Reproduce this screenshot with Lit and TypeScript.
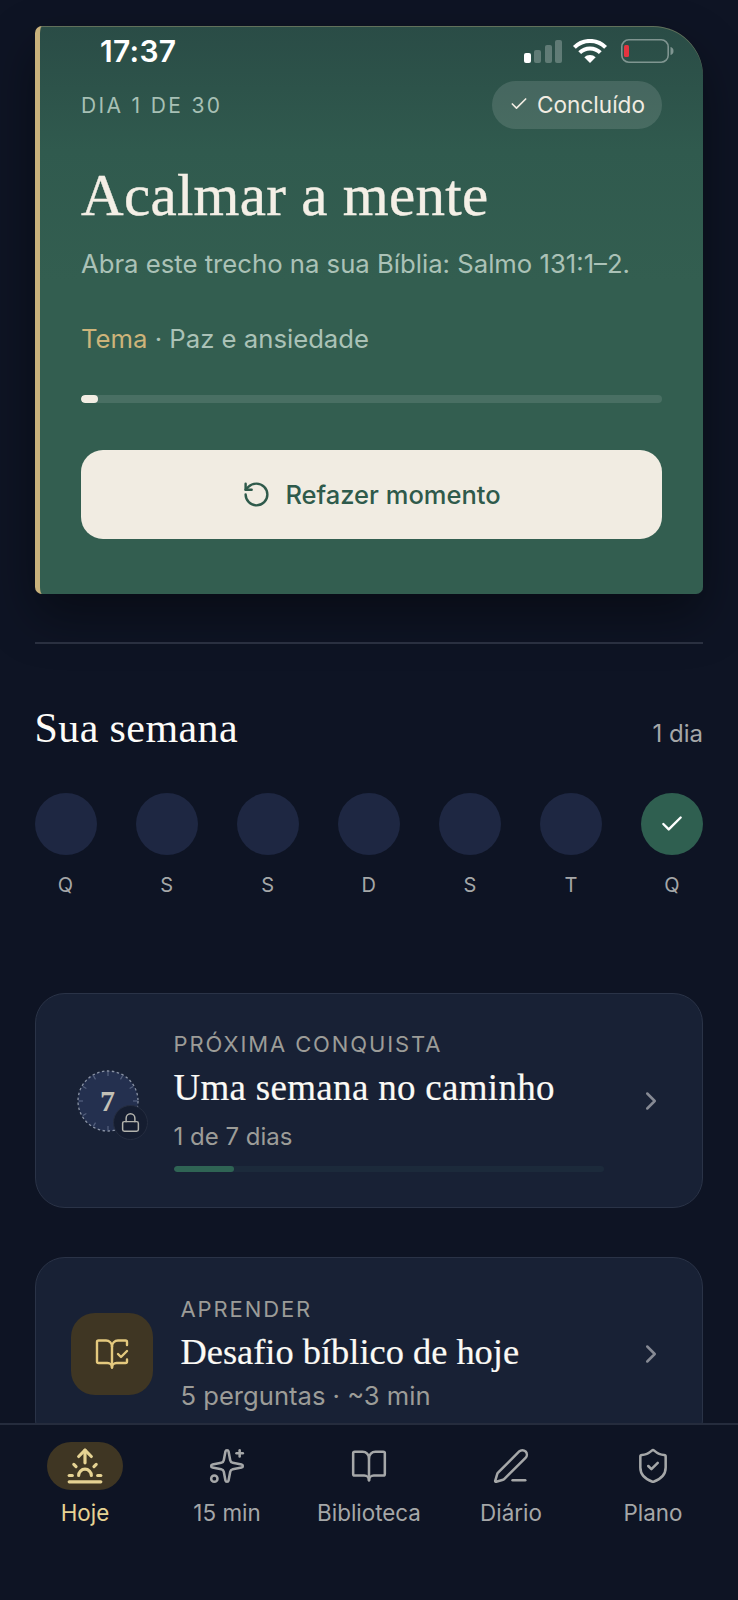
import { LitElement, html, css, svg } from "lit";
import { customElement } from "lit/decorators.js";

const icon = (size: number, sw: number, body: unknown) => html`<svg
  width=${size}
  height=${size}
  viewBox="0 0 24 24"
  fill="none"
  stroke="currentColor"
  stroke-width=${sw}
  stroke-linecap="round"
  stroke-linejoin="round"
>${body}</svg>`;

const P = {
  sunrise: svg`<path d="M12 2v8"/><path d="m4.93 10.93 1.41 1.41"/><path d="M2 18h2"/><path d="M20 18h2"/><path d="m19.07 10.93-1.41 1.41"/><path d="M22 22H2"/><path d="m8 6 4-4 4 4"/><path d="M16 18a4 4 0 0 0-8 0"/>`,
  sparkles: svg`<path d="M11.017 2.814a1 1 0 0 1 1.966 0l1.051 5.558a2 2 0 0 0 1.594 1.594l5.558 1.051a1 1 0 0 1 0 1.966l-5.558 1.051a2 2 0 0 0-1.594 1.594l-1.051 5.558a1 1 0 0 1-1.966 0l-1.051-5.558a2 2 0 0 0-1.594-1.594l-5.558-1.051a1 1 0 0 1 0-1.966l5.558-1.051a2 2 0 0 0 1.594-1.594z"/><path d="M20 2v4"/><path d="M22 4h-4"/><circle cx="4" cy="20" r="2"/>`,
  book: svg`<path d="M12 7v14"/><path d="M3 18a1 1 0 0 1-1-1V4a1 1 0 0 1 1-1h5a4 4 0 0 1 4 4 4 4 0 0 1 4-4h5a1 1 0 0 1 1 1v13a1 1 0 0 1-1 1h-6a3 3 0 0 0-3 3 3 3 0 0 0-3-3z"/>`,
  pen: svg`<path d="M13 21h8"/><path d="M21.174 6.812a1 1 0 0 0-3.986-3.987L3.842 16.174a2 2 0 0 0-.5.83l-1.321 4.352a.5.5 0 0 0 .623.622l4.353-1.32a2 2 0 0 0 .83-.497z"/>`,
  shield: svg`<path d="M20 13c0 5-3.5 7.5-7.66 8.95a1 1 0 0 1-.67-.01C7.5 20.5 4 18 4 13V6a1 1 0 0 1 1-1c2 0 4.5-1.2 6.24-2.72a1.17 1.17 0 0 1 1.52 0C14.51 3.81 17 5 19 5a1 1 0 0 1 1 1z"/><path d="m9 12 2 2 4-4"/>`,
  bookCheck: svg`<path d="M12 21V7"/><path d="m16 12 2 2 4-4"/><path d="M22 6V4a1 1 0 0 0-1-1h-5a4 4 0 0 0-4 4 4 4 0 0 0-4-4H3a1 1 0 0 0-1 1v13a1 1 0 0 0 1 1h6a3 3 0 0 1 3 3 3 3 0 0 1 3-3h6a1 1 0 0 0 1-1v-1.3"/>`,
  rotate: svg`<path d="M3 12a9 9 0 1 0 9-9 9.75 9.75 0 0 0-6.74 2.74L3 8"/><path d="M3 3v5h5"/>`,
  lock: svg`<rect x="3" y="11" width="18" height="11" rx="2"/><path d="M7 11V7a5 5 0 0 1 10 0v4"/>`,
  check: svg`<path d="M20 6 9 17l-5-5"/>`,
  chevron: svg`<path d="m9 18 6-6-6-6"/>`,
};

const DAYS = ["Q", "S", "S", "D", "S", "T", "Q"];
const NAV = [
  { label: "Hoje", icon: P.sunrise, active: true },
  { label: "15 min", icon: P.sparkles, active: false },
  { label: "Biblioteca", icon: P.book, active: false },
  { label: "Diário", icon: P.pen, active: false },
  { label: "Plano", icon: P.shield, active: false },
];

const ticks = Array.from({ length: 12 }, (_, i) => {
  const a = (i * Math.PI) / 6;
  const s = Math.sin(a);
  const c = Math.cos(a);
  return svg`<line x1=${31 + 29 * s} y1=${31 - 29 * c} x2=${31 + 25 * s} y2=${31 - 25 * c}/>`;
});

@customElement("app-root")
export class AppRoot extends LitElement {
  static styles = css`
    :host {
      display: block;
      position: relative;
      height: 1600px;
      overflow: hidden;
      background: #0e1424;
      font-family: "Inter", "Liberation Sans", sans-serif;
      color: #f4efe6;
    }
    svg {
      display: block;
      flex: none;
    }
    .page {
      padding: 26px 35px 0 34.5px;
    }
    .serif {
      font-family: "Liberation Serif", serif;
    }

    .status {
      position: absolute;
      top: 37px;
      left: 100px;
      width: 574px;
      height: 28px;
      display: flex;
      align-items: center;
      justify-content: space-between;
    }
    .time {
      font-size: 30px;
      font-weight: 600;
      line-height: 28px;
      color: #fff;
      letter-spacing: 0.3px;
    }

    .hero {
      height: 568px;
      box-sizing: border-box;
      padding: 55px 41px 54px 41.5px;
      border-left: 5px solid #c9b27c;
      border-radius: 7px 50px 7px 7px;
      background: linear-gradient(180deg, #2a4c46 0%, #305a4e 22%, #335e50 45%, #335e50 100%);
      box-shadow: 0 22px 50px rgba(0, 0, 0, 0.4), inset 0 1px 0 rgba(200, 180, 130, 0.35);
    }
    .hero-top {
      display: flex;
      align-items: center;
      justify-content: space-between;
    }
    .day {
      font-size: 21px;
      letter-spacing: 2.35px;
      color: #a7c0b5;
    }
    .chip {
      height: 48px;
      box-sizing: border-box;
      padding: 0 17px 2px;
      display: flex;
      align-items: center;
      gap: 8px;
      border-radius: 24px;
      background: rgba(255, 255, 255, 0.12);
      font-size: 22.6px;
      color: #f1ece2;
    }
    .hero h1 {
      margin: 34px 0 0;
      font-size: 59px;
      line-height: 64px;
      font-weight: 400;
      letter-spacing: 0.3px;
      color: #f4efe6;
      -webkit-text-stroke: 0.4px #f4efe6;
    }
    .verse {
      margin: 21px 0 0;
      font-size: 25.7px;
      line-height: 32px;
      color: #abc2b7;
    }
    .theme {
      margin: 43px 0 0;
      font-size: 25.7px;
      line-height: 32px;
      color: #abc2b7;
    }
    .theme b {
      font-weight: 400;
      color: #cdb47a;
    }
    .track {
      margin-top: 40px;
      height: 8px;
      border-radius: 4px;
      background: rgba(255, 255, 255, 0.11);
      overflow: hidden;
    }
    .track i {
      display: block;
      height: 100%;
      border-radius: 4px;
      background: #f2ede3;
    }
    .cta {
      margin-top: 47px;
      height: 89px;
      border-radius: 22px;
      background: #f1ece2;
      color: #2f5a4b;
      display: flex;
      align-items: center;
      justify-content: center;
      gap: 14px;
      font-size: 25.5px;
      font-weight: 500;
    }

    .divider {
      margin-top: 48px;
      height: 2px;
      background: #2a3040;
    }
    .week-head {
      margin-top: 62px;
      display: flex;
      align-items: baseline;
      justify-content: space-between;
    }
    .week-head h2 {
      margin: 0;
      font-size: 42px;
      line-height: 44px;
      font-weight: 400;
      letter-spacing: 0.4px;
      color: #fdfcf8;
    }
    .week-head span {
      font-size: 24px;
      color: #a5a7a8;
    }
    .days {
      margin-top: 43px;
      display: flex;
      justify-content: space-between;
    }
    .dayc {
      width: 62px;
      display: flex;
      flex-direction: column;
      align-items: center;
      gap: 16px;
    }
    .dot {
      width: 62px;
      height: 62px;
      border-radius: 50%;
      background: #1e2742;
      display: flex;
      align-items: center;
      justify-content: center;
      color: #fff;
    }
    .dot.on {
      background: #2f5f50;
    }
    .dayc span {
      font-size: 20px;
      line-height: 28px;
      color: #a5a7a8;
    }

    .card {
      box-sizing: border-box;
      border: 1px solid #2a3347;
      border-radius: 30px;
      background: #182135;
      display: flex;
      align-items: center;
    }
    .goal {
      margin-top: 94px;
      height: 215px;
      padding-left: 41px;
    }
    .learn {
      margin-top: 49px;
      height: 193px;
      padding-left: 35px;
    }
    .badge {
      position: relative;
      width: 62px;
      height: 62px;
      flex: none;
      margin-right: 35px;
      display: flex;
      align-items: center;
      justify-content: center;
    }
    .badge svg.dial {
      position: absolute;
      inset: 0;
    }
    .badge .num {
      position: relative;
      font-size: 30px;
      font-weight: 700;
      color: #c2c0b6;
    }
    .lockb {
      position: absolute;
      left: 36px;
      top: 35px;
      width: 35px;
      height: 35px;
      box-sizing: border-box;
      border-radius: 50%;
      background: #151d30;
      border: 1px solid #252d40;
      display: flex;
      align-items: center;
      justify-content: center;
      color: #b3b3ad;
    }
    .body {
      width: 430px;
      flex: none;
    }
    .eyebrow {
      font-size: 22px;
      line-height: 28px;
      letter-spacing: 1.9px;
      color: #9c9c98;
    }
    .title {
      font-size: 36.4px;
      line-height: 44px;
      color: #fbfaf5;
      -webkit-text-stroke: 0.2px #fbfaf5;
    }
    .goal .title {
      margin-top: 8px;
      font-size: 37px;
      letter-spacing: 0.3px;
    }
    .learn .title {
      margin-top: 7px;
    }
    .sub {
      font-size: 24px;
      line-height: 32px;
      color: #9c9c98;
    }
    .goal .sub {
      margin-top: 11px;
    }
    .learn .sub {
      margin-top: 6px;
      font-size: 25.6px;
    }
    .mini {
      margin-top: 13px;
      height: 6px;
      border-radius: 3px;
      background: #1c2a3b;
      overflow: hidden;
    }
    .mini i {
      display: block;
      height: 100%;
      border-radius: 3px;
      background: #2f6454;
    }
    .chev {
      margin-left: 32px;
      color: #868a94;
    }
    .learn .chev {
      margin-left: 25px;
    }
    .tile {
      width: 82px;
      height: 82px;
      flex: none;
      margin-right: 28px;
      border-radius: 24px;
      background: #3f3623;
      color: #e4c97e;
      display: flex;
      align-items: center;
      justify-content: center;
    }

    nav {
      position: absolute;
      left: 0;
      right: 0;
      top: 1423px;
      bottom: 0;
      box-sizing: border-box;
      padding: 17px 14px 0;
      display: grid;
      grid-template-columns: repeat(5, 1fr);
      align-items: start;
      background: #0e1424;
      border-top: 2px solid #252c3d;
    }
    .tab {
      display: flex;
      flex-direction: column;
      align-items: center;
      color: #a5a7a8;
      font-size: 22.4px;
      line-height: 28px;
    }
    .pill {
      width: 76px;
      height: 48px;
      border-radius: 24px;
      display: flex;
      align-items: center;
      justify-content: center;
      margin-bottom: 9px;
    }
    .tab.active {
      color: #e6d393;
    }
    .tab.active .pill {
      background: #3f3623;
    }
  `;

  render() {
    return html`
      <div class="page">
        <section class="hero">
          <div class="hero-top">
            <span class="day">DIA 1 DE 30</span>
            <span class="chip">${icon(20, 2, P.check)}Concluído</span>
          </div>
          <h1 class="serif">Acalmar a mente</h1>
          <p class="verse">Abra este trecho na sua Bíblia: Salmo 131:1–2.</p>
          <p class="theme"><b>Tema</b> · Paz e ansiedade</p>
          <div class="track"><i style="width:${(1 / 34) * 100}%"></i></div>
          <div class="cta">${icon(29, 2, P.rotate)}Refazer momento</div>
        </section>

        <div class="divider"></div>

        <div class="week-head">
          <h2 class="serif">Sua semana</h2>
          <span>1 dia</span>
        </div>
        <div class="days">
          ${DAYS.map(
            (d, i) => html`<div class="dayc">
              <div class="dot ${i === 6 ? "on" : ""}">
                ${i === 6 ? icon(26, 2.2, P.check) : ""}
              </div>
              <span>${d}</span>
            </div>`
          )}
        </div>

        <section class="card goal">
          <div class="badge">
            <svg class="dial" width="62" height="62" viewBox="0 0 62 62" fill="none">
              <circle cx="31" cy="31" r="30" fill="#24304f" stroke="#8a93a5" stroke-width="1.3" stroke-dasharray="2.5 2.5" />
              <g stroke="#55617e" stroke-width="1.2">${ticks}</g>
            </svg>
            <span class="num serif">7</span>
            <div class="lockb">${icon(21, 1.7, P.lock)}</div>
          </div>
          <div class="body">
            <div class="eyebrow">PRÓXIMA CONQUISTA</div>
            <div class="title serif">Uma semana no caminho</div>
            <div class="sub">1 de 7 dias</div>
            <div class="mini"><i style="width:${(60 / 430) * 100}%"></i></div>
          </div>
          <div class="chev">${icon(30, 2, P.chevron)}</div>
        </section>

        <section class="card learn">
          <div class="tile">${icon(36, 1.6, P.bookCheck)}</div>
          <div class="body">
            <div class="eyebrow">APRENDER</div>
            <div class="title serif">Desafio bíblico de hoje</div>
            <div class="sub">5 perguntas · ~3 min</div>
          </div>
          <div class="chev">${icon(30, 2, P.chevron)}</div>
        </section>
      </div>

      <div class="status">
        <span class="time">17:37</span>
        <svg width="151" height="24" viewBox="0 0 151 24" fill="none">
          <rect x="1" y="14" width="7" height="10" rx="2" fill="#fff" />
          <rect x="11" y="11" width="7" height="13" rx="2" fill="#fff" fill-opacity=".25" />
          <rect x="22" y="6" width="7" height="18" rx="2" fill="#fff" fill-opacity=".25" />
          <rect x="32" y="1" width="7" height="23" rx="2" fill="#fff" fill-opacity=".25" />
          <g stroke="#fff" stroke-width="4" stroke-linecap="butt">
            <path d="M51.4 8.4a22 22 0 0 1 31.2 0" />
            <path d="M56.7 13.7a14.5 14.5 0 0 1 20.6 0" />
          </g>
          <path d="M61.3 18.3a8 8 0 0 1 11.4 0L67 24z" fill="#fff" />
          <rect x="98.8" y="0.8" width="46.4" height="22.4" rx="7" stroke="#fff" stroke-opacity=".4" stroke-width="1.6" />
          <rect x="101" y="6" width="5" height="12" rx="1.5" fill="#e5343f" />
          <path d="M147.5 8v8a4 4 0 0 0 3-4 4 4 0 0 0-3-4z" fill="#fff" fill-opacity=".4" />
        </svg>
      </div>

      <nav>
        ${NAV.map(
          (n) => html`<div class="tab ${n.active ? "active" : ""}">
            <div class="pill">${icon(38, n.active ? 2 : 1.6, n.icon)}</div>
            ${n.label}
          </div>`
        )}
      </nav>
    `;
  }
}
